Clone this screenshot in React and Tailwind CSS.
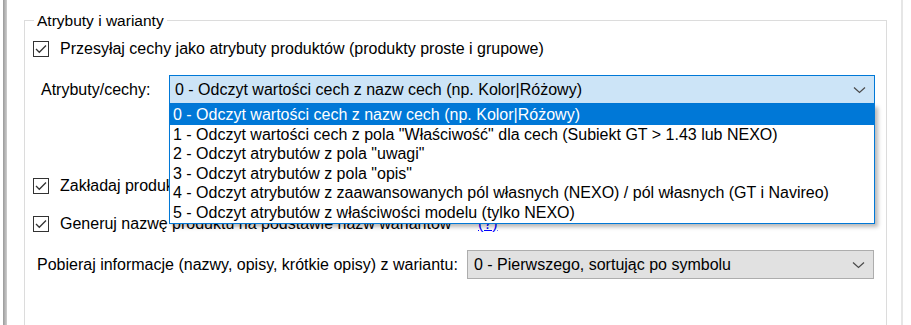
import { useState } from 'react'

const attrOptions = [
  '0 - Odczyt wartości cech z nazw cech (np. Kolor|Różowy)',
  '1 - Odczyt wartości cech z pola "Właściwość" dla cech (Subiekt GT > 1.43 lub NEXO)',
  '2 - Odczyt atrybutów z pola "uwagi"',
  '3 - Odczyt atrybutów z pola "opis"',
  '4 - Odczyt atrybutów z zaawansowanych pól własnych (NEXO) / pól własnych (GT i Navireo)',
  '5 - Odczyt atrybutów z właściwości modelu (tylko NEXO)',
]

function Chevron() {
  return (
    <svg width="13" height="8" viewBox="0 0 13 8" className="shrink-0">
      <polyline points="1,1.5 6.5,6.5 12,1.5" fill="none" stroke="#4a4a4a" strokeWidth="1.2" />
    </svg>
  )
}

function CheckBox({ checked }) {
  return (
    <div className="w-[16px] h-[16px] shrink-0 border border-[#333333] bg-white flex items-center justify-center">
      {checked && (
        <svg width="12" height="10" viewBox="0 0 12 10">
          <polyline points="1,5 4.3,8.3 11,1.5" fill="none" stroke="#333333" strokeWidth="1.3" />
        </svg>
      )}
    </div>
  )
}

function CheckRow({ label, labelClass = '', children, className = '' }) {
  return (
    <div className={`flex items-center h-[20px] pl-[8px] ${className}`}>
      <CheckBox checked />
      <span className={`ml-[11px] whitespace-nowrap ${labelClass}`}>{label}</span>
      {children}
    </div>
  )
}

export default function App() {
  const [selected] = useState(0)

  return (
    <div
      className="w-[911px] h-[325px] overflow-hidden bg-white flex text-black text-[16px] leading-[20px]"
      style={{ fontFamily: '"Liberation Sans", Arial, sans-serif' }}
    >
      {/* window edge on the left */}
      <div className="ml-[3px] w-[4px] h-full bg-gradient-to-r from-[#9a9a9a] to-[#cfcfcf]" />

      {/* group box */}
      <div className="ml-[17px] mt-[20px] w-[863px] h-[320px] border-l border-t border-r border-[#dcdcdc] shrink-0">
        <div className="-mt-[9px] ml-[9px] px-[3px] w-fit h-[18px] leading-[18px] bg-white text-[15.5px]">
          Atrybuty i warianty
        </div>

        <CheckRow label="Przesyłaj cechy jako atrybuty produktów (produkty proste i grupowe)" className="mt-[9px]" />

        {/* Atrybuty/cechy combo with open list */}
        <div className="relative flex items-center mt-[16px] pl-[16px] h-[29px]">
          <span className="w-[128px] shrink-0 whitespace-nowrap">Atrybuty/cechy:</span>
          <div className="w-[706px] h-[29px] border border-[#0078d7] bg-[#cce4f7] flex items-center justify-between pl-[5px] pr-[8px]">
            <span className="whitespace-nowrap">{attrOptions[selected]}</span>
            <Chevron />
          </div>

          <div className="absolute left-[144px] top-[29px] w-[706px] border border-[#0078d7] bg-white z-10 shadow-[3px_3px_4px_rgba(0,0,0,0.28)]">
            {attrOptions.map((opt, i) => (
              <div
                key={opt}
                className={`h-[19.6px] leading-[19.6px] pl-[3px] whitespace-nowrap ${
                  i === selected ? 'bg-[#0078d7] text-white' : ''
                }`}
              >
                {opt}
              </div>
            ))}
          </div>
        </div>

        <CheckRow label="Zakładaj produkty wariantowe na podstawie cech" className="mt-[72px]" />

        <CheckRow
          label="Generuj nazwę produktu na podstawie nazw wariantów"
          labelClass="w-[418px]"
          className="mt-[18px]"
        >
          <span className="text-[#0000ff] underline">(?)</span>
        </CheckRow>

        <div className="flex items-center mt-[16px] pl-[12px] h-[29px]">
          <span className="w-[430px] shrink-0 whitespace-nowrap">
            Pobieraj informacje (nazwy, opisy, krótkie opisy) z wariantu:
          </span>
          <div className="w-[407px] h-[29px] border border-[#adadad] bg-[#e1e1e1] flex items-center justify-between pl-[6px] pr-[8px]">
            <span className="whitespace-nowrap">0 - Pierwszego, sortując po symbolu</span>
            <Chevron />
          </div>
        </div>
      </div>

      {/* right splitter line */}
      <div className="ml-[14px] w-[2px] h-full bg-[#e6e6e6] shrink-0" />
    </div>
  )
}
